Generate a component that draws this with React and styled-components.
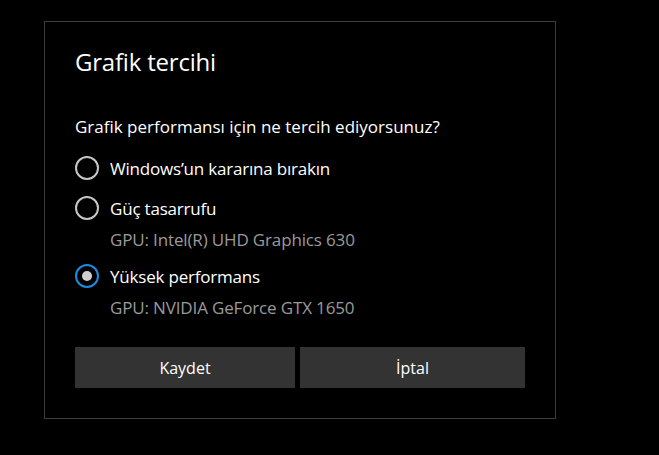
import React, { useState } from "react"
import styled, { createGlobalStyle } from 'styled-components';

const GlobalStyle = createGlobalStyle`
  html, body {
    margin: 0;
    padding: 0;
    background: #000;
  }
  body {
    font-family: "Open Sans", "Noto Sans", sans-serif;
    color: #fff;
  }
`;

const options = [
  { id: 'auto', label: 'Windows’un kararına bırakın' },
  { id: 'save', label: 'Güç tasarrufu', gpu: 'GPU: Intel(R) UHD Graphics 630' },
  { id: 'perf', label: 'Yüksek performans', gpu: 'GPU: NVIDIA GeForce GTX 1650' },
];

const App = () => {
  const [choice, setChoice] = useState('perf');
  return (
    <Page>
      <GlobalStyle />
      <Dialog>
        <Title>Grafik tercihi</Title>
        <Question>Grafik performansı için ne tercih ediyorsunuz?</Question>
        <OptionList>
          {options.map(o => (
            <Option key={o.id} onClick={() => setChoice(o.id)}>
              <RadioRow>
                <Radio checked={choice === o.id} />
                <Label>{o.label}</Label>
              </RadioRow>
              {o.gpu && <Gpu>{o.gpu}</Gpu>}
            </Option>
          ))}
        </OptionList>
        <Buttons>
          <Button>Kaydet</Button>
          <Button>İptal</Button>
        </Buttons>
      </Dialog>
    </Page>
  );
}

const Page = styled.div`
  width: 659px;
  height: 455px;
  padding: 21px 0 0 44px;
  box-sizing: border-box;
`;

const Dialog = styled.div`
  width: 512px;
  height: 398px;
  box-sizing: border-box;
  border: 1px solid #3c3c3c;
  padding: 0 30px;
  display: flex;
  flex-direction: column;
`;

const Title = styled.h1`
  margin: 25px 0 0;
  font-size: 24px;
  font-weight: 400;
  line-height: 30px;
  letter-spacing: -0.2px;
`;

const Question = styled.p`
  margin: 38px 0 0;
  font-size: 17px;
  line-height: 24px;
`;

const OptionList = styled.div`
  display: flex;
  flex-direction: column;
  margin-top: 11px;
`;

const Option = styled.div`
  display: flex;
  flex-direction: column;
  cursor: pointer;
  & + & {
    margin-top: 4px;
  }
`;

const RadioRow = styled.div`
  display: flex;
  align-items: center;
  height: 36px;
`;

const Radio = styled.span`
  width: 24px;
  height: 24px;
  box-sizing: border-box;
  border-radius: 50%;
  border: 2.5px solid ${p => (p.checked ? '#1b8ae0' : '#c6c6c6')};
  display: flex;
  align-items: center;
  justify-content: center;
  margin-right: 11px;
  &::after {
    content: '';
    width: 10px;
    height: 10px;
    border-radius: 50%;
    background: #d0d0d0;
    display: ${p => (p.checked ? 'block' : 'none')};
  }
`;

const Label = styled.span`
  font-size: 17px;
  letter-spacing: -0.2px;
`;

const Gpu = styled.span`
  margin-left: 35px;
  font-size: 17px;
  line-height: 28px;
  letter-spacing: -0.15px;
  color: #9a9a9a;
`;

const Buttons = styled.div`
  display: grid;
  grid-template-columns: 220px 225px;
  gap: 5px;
  margin-top: auto;
  margin-bottom: 30px;
`;

const Button = styled.button`
  height: 41px;
  border: none;
  background: #333333;
  color: #fff;
  font-family: inherit;
  font-size: 16px;
  padding: 0;
`;

export default App
